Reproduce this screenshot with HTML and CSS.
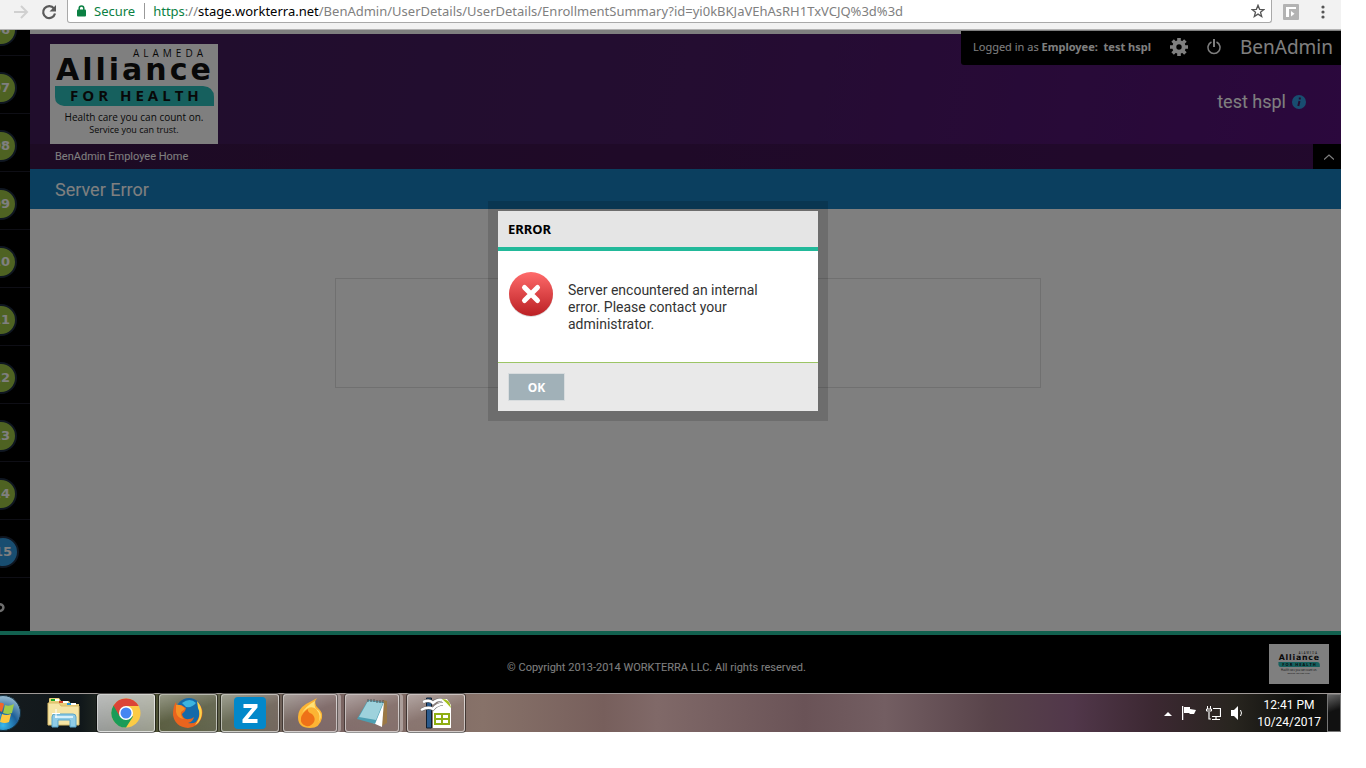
FILE: index.html
```
<!DOCTYPE html>
<html lang="en">

<head>
    <meta charset="UTF-8">
    <meta name="viewport" content="width=device-width, initial-scale=1.0">
    <title>Server Error - BenAdmin</title>
    <link rel="stylesheet" href="styles.css">
</head>

<body>
    <div class="screen">
        <!-- Browser toolbar -->
        <div class="toolbar">
            <button class="tool-button" aria-label="Forward">
                <svg width="16" height="16" viewBox="0 0 16 16" fill="none" stroke="#d0d0d0" stroke-width="2"><path d="M1 8h12M8 2l6 6-6 6"/></svg>
            </button>
            <button class="tool-button" aria-label="Reload">
                <svg width="16" height="16" viewBox="0 0 16 16"><path d="M13 4.5A6 6 0 1 0 14 9.5" fill="none" stroke="#5a5a5a" stroke-width="2.2"/><path d="M15 1v6.500H8.500z" fill="#5a5a5a"/></svg>
            </button>
            <div class="address-bar">
                <svg width="9" height="12" viewBox="0 0 9 12"><path d="M2.200 5V3.300a2.300 2.300 0 0 1 4.600 0V5" fill="none" stroke="#0b8043" stroke-width="1.500"/><rect y="4.500" width="9" height="7" rx="1" fill="#0b8043"/></svg>
                <span class="secure">Secure</span>
                <span class="url"><span class="scheme">https</span>://<b>stage.workterra.net</b>/BenAdmin/UserDetails/UserDetails/EnrollmentSummary?id=yi0kBKJaVEhAsRH1TxVCJQ%3d%3d</span>
                <button class="tool-button star" aria-label="Bookmark this page">
                    <svg width="14" height="14" viewBox="0 0 14 14" fill="none" stroke="#555" stroke-width="1.300"><path d="M7 1.300l1.600 4 4.300.2-3.400 2.700 1.200 4.300L7 10.100l-3.700 2.400 1.200-4.300L1.100 5.500l4.300-.2z"/></svg>
                </button>
            </div>
            <button class="tool-button" aria-label="Extension">
                <svg width="16" height="16" viewBox="0 0 16 16"><rect width="16" height="16" rx="1" fill="#b3b3b3"/><path d="M3 13V3h10v2H6v8z" fill="#fff"/><path d="M8 7l3.500 2.700L8 12.500z" fill="#fff"/></svg>
            </button>
            <button class="tool-button menu" aria-label="Menu">
                <svg width="4" height="14" viewBox="0 0 4 14" fill="#555"><circle cx="2" cy="2" r="1.600"/><circle cx="2" cy="7" r="1.600"/><circle cx="2" cy="12" r="1.600"/></svg>
            </button>
        </div>

        <div class="page">
            <div class="page-body">
                <nav class="steps">
                    <ol>
                        <li><a href="#">06</a></li>
                        <li><a href="#">07</a></li>
                        <li><a href="#">08</a></li>
                        <li><a href="#">09</a></li>
                        <li><a href="#">10</a></li>
                        <li><a href="#">11</a></li>
                        <li><a href="#">12</a></li>
                        <li><a href="#">13</a></li>
                        <li><a href="#">14</a></li>
                        <li><a href="#" class="current">15</a></li>
                    </ol>
                    <svg class="steps-more" width="5" height="12" viewBox="0 0 5 12"><path d="M-2 2.500C5 1 5 9 -1 9" fill="none" stroke="#ddd" stroke-width="2.500"/></svg>
                </nav>

                <main>
                    <header class="banner">
                        <svg class="logo" width="168" height="100" viewBox="0 0 168 100">
                            <rect width="168" height="100" fill="#fff"/>
                            <g id="alliance">
                                <text x="83" y="13" font-size="10" letter-spacing="4">ALAMEDA</text>
                                <text class="wordmark" x="6" y="36" font-size="30" letter-spacing="3">Alliance</text>
                                <path d="M5 42h148q11 1 11 11v9H14q-9-1-9-9z" fill="#2cc0bc"/>
                                <text x="20" y="57" font-size="15" font-weight="700" letter-spacing="4">FOR HEALTH</text>
                                <text x="84" y="77" font-size="10" text-anchor="middle">Health care you can count on.</text>
                                <text x="84" y="89" font-size="9" text-anchor="middle">Service you can trust.</text>
                            </g>
                        </svg>
                        <div class="account">
                            <div class="login-bar">
                                <span>Logged in as <b>Employee:&nbsp; test hspl</b></span>
                                <a href="#" aria-label="Settings">
                                    <svg width="18" height="18" viewBox="0 0 18 18"><circle cx="9" cy="9" r="4.700" fill="none" stroke="#fff" stroke-width="4"/><path d="M9 0v4M9 14v4M0 9h4M14 9h4M2.600 2.600l3 3M12.400 12.400l3 3M2.600 15.400l3-3M12.400 5.600l3-3" stroke="#fff" stroke-width="3.600"/></svg>
                                </a>
                                <a href="#" aria-label="Log out">
                                    <svg width="14" height="16" viewBox="0 0 14 16" fill="none" stroke="#fff" stroke-width="1.500"><path d="M4.500 3a6 6 0 1 0 5 0"/><path d="M7 0v8" stroke-width="2"/></svg>
                                </a>
                                <span class="brand">BenAdmin</span>
                            </div>
                            <div class="user">
                                <span>test hspl</span>
                                <svg width="14" height="14" viewBox="0 0 14 14"><circle cx="7" cy="7" r="7" fill="#309be0"/><path d="M7.800 2.500v2M7.500 6l-1.200 5" stroke="#481860" stroke-width="2"/></svg>
                            </div>
                        </div>
                    </header>
                    <nav class="main-nav">
                        <a href="#">BenAdmin Employee Home</a>
                        <button class="collapse" aria-label="Collapse header">
                            <svg width="10" height="6" viewBox="0 0 10 6" fill="none" stroke="#fff" stroke-width="1.300"><path d="M0 5.500l5-4.500 5 4.500"/></svg>
                        </button>
                    </nav>
                    <h1>Server Error</h1>
                    <div class="content">
                        <div class="panel"></div>
                    </div>
                </main>
            </div>

            <footer>
                <p>© Copyright 2013-2014 WORKTERRA LLC. All rights reserved.</p>
                <div class="footer-logo">
                    <svg width="44" height="26" viewBox="0 0 168 100"><use href="#alliance"/></svg>
                </div>
            </footer>

            <div class="overlay">
                <div class="dialog" role="alertdialog" aria-labelledby="dialog-title" aria-describedby="dialog-text">
                    <h2 id="dialog-title">ERROR</h2>
                    <div class="dialog-body">
                        <svg width="46" height="46" viewBox="0 0 46 46">
                            <defs>
                                <linearGradient id="red" x1="0" y1="0" x2="0" y2="1">
                                    <stop offset="0" stop-color="#ff6b6b"/>
                                    <stop offset="1" stop-color="#bb2024"/>
                                </linearGradient>
                            </defs>
                            <circle cx="23" cy="24" r="22" fill="#ddd"/>
                            <circle cx="23" cy="23" r="22" fill="url(#red)"/>
                            <path d="M16.500 16.500l13 13M29.500 16.500l-13 13" stroke="#fff" stroke-width="5" stroke-linecap="round"/>
                        </svg>
                        <p id="dialog-text">Server encountered an internal error. Please contact your administrator.</p>
                    </div>
                    <div class="dialog-footer">
                        <button class="ok-button">OK</button>
                    </div>
                </div>
            </div>
        </div>

        <!-- Windows taskbar -->
        <div class="taskbar">
            <button class="start" aria-label="Start">
                <svg width="21" height="38" viewBox="0 0 21 38">
                    <defs>
                        <radialGradient id="orb" cx="0.5" cy="0.85" r="0.8">
                            <stop offset="0" stop-color="#38b8ee"/>
                            <stop offset="0.5" stop-color="#1c5f98"/>
                            <stop offset="1" stop-color="#8fb4cc"/>
                        </radialGradient>
                    </defs>
                    <circle cx="3" cy="19" r="17.500" fill="url(#orb)" stroke="#14303f"/>
                    <path d="M-4 11q5-4 8-1l-2 8q-4-2-8 0z" fill="#f0662b"/>
                    <path d="M5 11q4 2 9-1l-2 9q-4 2-9 0z" fill="#9fcb4a"/>
                    <path d="M-6 20q4-2 7 0l-2 8q-3-2-7 0z" fill="#4da8e0"/>
                    <path d="M2 20q4 2 9 0l-2 8q-4 2-9 0z" fill="#fdc840"/>
                </svg>
            </button>
            <button class="explorer" aria-label="Windows Explorer">
                <svg width="34" height="32" viewBox="0 0 34 32">
                    <path d="M2 8V2q0-1 1-1h9l2 3h8l2 3h8v5H2z" fill="#e9cf79"/>
                    <path d="M4 2h4v2H4z" fill="#16a524"/><path d="M12 4h4v2h-4z" fill="#d4452b"/><path d="M20 6h4v2h-4z" fill="#2797d8"/>
                    <path d="M8 2h4v2H8zM16 4h5v2h-5zM24 6h5v2h-5z" fill="#fff"/>
                    <path d="M1 6h11l2 3h18v19H1z" fill="#f6e5a6" stroke="#d9bd6b"/>
                    <path d="M5 30V20q0-3 3-3h18q3 0 3 3v10h-6v-7H11v7z" fill="#8fcbe6" stroke="#5aa6cb"/>
                    <path d="M8 20h18" stroke="#d8f0fa" stroke-width="2"/>
                    <path d="M9 12v9M5 16.500h8" stroke="#fff"/>
                </svg>
            </button>
            <button class="task active" aria-label="Google Chrome">
                <svg width="30" height="30" viewBox="0 0 30 30">
                    <circle cx="15" cy="15" r="14.500" fill="#fccb45"/>
                    <path d="M15 15L2.500 7.500A14.500 14.500 0 0 0 15 29.500l7-11z" fill="#1a9c58"/>
                    <path d="M15 8h12.700A14.500 14.500 0 0 0 2.500 7.500L8.500 18 15 15z" fill="#db4437"/>
                    <circle cx="15" cy="15" r="7" fill="#fff"/><circle cx="15" cy="15" r="5.500" fill="#4586f2"/>
                </svg>
            </button>
            <button class="task" aria-label="Firefox">
                <svg width="30" height="30" viewBox="0 0 30 30">
                    <circle cx="16" cy="13" r="13" fill="#166aa9"/>
                    <path d="M9 5q8-6 14 0-4 5-10 4z" fill="#3cb4df"/>
                    <path d="M25 4q7 8 3 17-3 8-13 9Q2 29 0 17 0 8 3 4l1 4 4-1q2 1 5 3l-1 3-3 3q1 6 7 5 3 0 5-2-1 5-6 6 9 2 11-7 1-6-1-14z" fill="#e9641e"/>
                    <path d="M24 3q7 8 4 17-2 5-6 7 7-9 3-17z" fill="#fcd34a"/>
                    <path d="M3 7q5-1 9 4l-4 3q-1 4 3 7-7-1-8-7z" fill="#f59025"/>
                </svg>
            </button>
            <button class="task" aria-label="Zoho">
                <svg width="32" height="32" viewBox="0 0 32 32"><rect width="32" height="32" rx="4" fill="#0288ca"/><path d="M9.500 7h14v3.500l-9.500 11.500h9.500v4H8.500V22.500L18 11H9.500z" fill="#fff"/></svg>
            </button>
            <button class="task stacked" aria-label="Spark">
                <svg width="26" height="32" viewBox="0 0 26 32">
                    <path d="M20 1q-4 5 1 10 5 4 4 10-2 10-12 10Q1 31 1 20q0-8 8-13Q15 4 20 1z" fill="#fcb434"/>
                    <path d="M18 4q-9 5-13 12 8-9 14-4 6 7 2 14 5-7 1-12-6-3-4-10z" fill="#ffe278"/>
                    <path d="M11 12q-1 3 4 5 4 4 2 8-3 5-8 4-6-2-5-8 1-5 7-9z" fill="#ee7118"/>
                </svg>
            </button>
            <button class="task stacked" aria-label="Notepad">
                <svg width="32" height="30" viewBox="0 0 32 30">
                    <path d="M27 2l4 1v22l-5 3z" fill="#9b7845"/><path d="M28 3l-2 26-9-4z" fill="#fff"/>
                    <path d="M12 2l16 2-9 22L1 21z" fill="#4d9fb2"/><path d="M12 3l15 2-7 17L3 19z" fill="#9ed2dc"/>
                    <path d="M12 1v3M15 1v3M18 1v3M21 2v3M24 2v3M27 2v3" stroke="#545454"/>
                </svg>
            </button>
            <button class="task" aria-label="OpenOffice Calc">
                <svg width="32" height="32" viewBox="0 0 32 32">
                    <path d="M6.500 1h5v30h-5z" fill="#2b5a8c" stroke="#101e2f"/>
                    <path d="M13 11l9-9h5l4 6v23H13z" fill="#fff"/><path d="M22 2q8 0 9 9-4-5-9-9z" fill="#a3bf1d"/>
                    <path d="M14 16h16v12H14z" fill="#8fae12"/><path d="M16 18h5v3h-5zM23 18h5v3h-5zM16 23h5v3h-5zM23 23h5v3h-5z" fill="#fff"/>
                    <path d="M3 5q7-3 10 1 4-4 9-3M1 13q7-4 12-1 4-5 10-5" fill="none" stroke="#666" stroke-width="3.500"/>
                    <path d="M3 5q7-3 10 1 4-4 9-3M1 13q7-4 12-1 4-5 10-5" fill="none" stroke="#fff" stroke-width="2.500"/>
                </svg>
            </button>

            <div class="tray">
                <svg width="8" height="5" viewBox="0 0 8 5"><path d="M0 5l4-4 4 4z" fill="#fff"/></svg>
                <svg width="14" height="14" viewBox="0 0 14 14"><path d="M.500 0v14" stroke="#fff" stroke-width="1.500"/><path d="M2 1h6v2l6 1-2 4H8L7 7H2z" fill="#fff"/></svg>
                <svg width="15" height="14" viewBox="0 0 15 14" fill="none" stroke="#fff"><path d="M7 2.500h7.500v8H6M10 11v2M6 13.500h8M3 6v7h2" stroke-width="1.200"/><path d="M1.500 0v3M4.500 0v3M.500 3h5v2h-5z"/></svg>
                <svg width="13" height="14" viewBox="0 0 13 14"><path d="M0 4h3l4-4v14l-4-4H0z" fill="#fff"/><path d="M9.500 4q2 3 0 6" fill="none" stroke="#fff"/></svg>
                <div class="clock">12:41 PM<br>10/24/2017</div>
            </div>
            <button class="show-desktop" aria-label="Show desktop"></button>
        </div>
    </div>
</body>

</html>
```
FILE: styles.css
```
* {
    box-sizing: border-box;
}

body {
    margin: 0;
    background: #fff;
    font-family: Roboto, Tahoma, sans-serif;
    font-size: 11px;
    color: #fff;
}

button {
    padding: 0;
    border: none;
    background: none;
    font-family: inherit;
    cursor: pointer;
}

svg {
    display: block;
    flex-shrink: 0;
}

a {
    color: inherit;
    text-decoration: none;
}

.screen {
    display: flex;
    flex-direction: column;
    min-height: calc(100vh - 36px);
    margin: 0 25px 36px 0;
}

/* Browser toolbar */

.toolbar {
    display: flex;
    align-items: center;
    height: 30px;
    padding: 0 6px 6px 13px;
    gap: 12px;
    background: #f2f2f2;
    border-bottom: 1px solid #b4b4b4;
}

.address-bar {
    display: flex;
    flex: 1;
    align-items: center;
    align-self: stretch;
    min-width: 0;
    margin: 0 -1px 0 -2px;
    padding: 0 6px 0 9px;
    gap: 8px;
    background: #fff;
    border: 1px solid #a9a9a9;
    border-top: none;
    border-radius: 0 0 3px 3px;
    font-family: 'Noto Sans', 'Segoe UI', sans-serif;
    font-size: 13px;
    line-height: 16px;
    color: #808080;
    white-space: nowrap;
}

.secure {
    padding-right: 9px;
    border-right: 1px solid #999;
    color: #0b8043;
}

.url {
    overflow: hidden;
    height: 20px;
    line-height: 20px;
}

.url b {
    font-weight: 400;
    color: #000;
}

.scheme {
    color: #0b8043;
}

.star {
    margin-left: auto;
}

.menu {
    width: 24px;
    padding-left: 10px;
}

/* Page */

.page {
    position: relative;
    display: flex;
    flex: 1;
    flex-direction: column;
}

.page-body {
    display: flex;
    flex: 1;
}

.steps {
    width: 30px;
    overflow: hidden;
    background: #000;
}

.steps ol {
    margin: -32px 0 0;
    padding: 0;
    list-style: none;
}

.steps li {
    display: flex;
    align-items: center;
    height: 58px;
    padding-top: 6px;
    border-bottom: 1px solid #1c1c2a;
}

.steps a {
    width: 32px;
    height: 32px;
    margin-left: -15px;
    border: 2px solid #1e2c42;
    border-radius: 50%;
    background: #9cc544;
    font-family: 'DejaVu Sans', Verdana, sans-serif;
    font-size: 13px;
    font-weight: 700;
    line-height: 28px;
    text-align: center;
}

.steps a.current {
    margin-left: -13px;
    background: #309be0;
}

.steps-more {
    margin-top: 24px;
}

main {
    display: flex;
    flex: 1;
    flex-direction: column;
    min-width: 0;
    padding-top: 4px;
    background: #fff;
}

.banner {
    display: flex;
    justify-content: space-between;
    height: 110px;
    padding-left: 20px;
    background: linear-gradient(100deg, #401a58, #481a62 50%, #56107a);
}

.logo {
    margin-top: 10px;
}

#alliance {
    font-family: 'Open Sans', sans-serif;
    fill: #111;
}

.wordmark {
    font-family: 'DejaVu Sans', Verdana, sans-serif;
    font-weight: 700;
}

.account {
    margin-top: -3px;
}

.login-bar {
    display: flex;
    align-items: center;
    height: 34px;
    padding: 0 8px 3px 12px;
    gap: 19px;
    background: #000;
    border-radius: 0 0 0 3px;
    font-family: 'Noto Sans', Tahoma, sans-serif;
}

.brand {
    font-size: 19px;
    line-height: 24px;
}

.user {
    display: flex;
    justify-content: flex-end;
    align-items: center;
    gap: 6px;
    margin-top: 25px;
    padding-right: 35px;
    font-size: 18px;
    line-height: 24px;
}

.main-nav {
    display: flex;
    justify-content: space-between;
    align-items: center;
    height: 25px;
    padding-left: 25px;
    background: linear-gradient(100deg, #3a1648, #44125a);
    line-height: 16px;
}

.collapse {
    display: flex;
    justify-content: center;
    align-items: center;
    width: 28px;
    height: 25px;
    padding-left: 4px;
    background: #000;
}

h1 {
    margin: 0;
    padding: 2px 25px 0;
    background: #167ebe;
    font-size: 18px;
    font-weight: 400;
    line-height: 38px;
}

.content {
    flex: 1;
    padding: 69px 0 69px 5px;
}

.panel {
    width: 54%;
    height: 110px;
    margin: 0 auto;
    border: 1px solid #e0e0e0;
}

footer {
    display: grid;
    grid-template-columns: 1fr auto 1fr;
    align-items: center;
    height: 62px;
    padding-right: 28px;
    background: #000;
    border-top: 4px solid #24c29e;
}

footer p {
    grid-column: 2;
    margin: 0;
    padding-top: 8px;
    line-height: 16px;
}

.footer-logo {
    display: flex;
    justify-content: center;
    align-items: center;
    justify-self: end;
    width: 60px;
    height: 40px;
    margin-right: -16px;
    background: #fff;
}

/* Error dialog */

.overlay {
    position: absolute;
    inset: 0;
    display: flex;
    justify-content: center;
    align-items: flex-start;
    padding: 171px 25px 0 0;
    background: rgba(0, 0, 0, 0.5);
}

.dialog {
    width: 340px;
    border: 10px solid rgba(0, 0, 0, 0.14);
    background: #fff;
    background-clip: padding-box;
    color: #333;
}

.dialog h2 {
    margin: 0;
    padding: 0 10px;
    background: #e5e5e5;
    border-bottom: 4px solid #22b99a;
    color: #000;
    font-family: 'Noto Sans', Tahoma, sans-serif;
    font-size: 13px;
    line-height: 36px;
}

.dialog-body {
    display: flex;
    gap: 14px;
    padding: 20px 50px 29px 10px;
}

.dialog-body p {
    margin: 11px 0 0;
    font-size: 14px;
    line-height: 17px;
}

.dialog-footer {
    padding: 10px;
    background: #e9e9e9;
    border-top: 1px solid #9cc565;
}

.ok-button {
    display: block;
    width: 57px;
    height: 28px;
    background: #a1b1b8;
    border: 1px solid #d8dcde;
    color: #fff;
    font-family: 'Noto Sans', Tahoma, sans-serif;
    font-size: 12px;
    font-weight: 700;
}

/* Taskbar */

.taskbar {
    display: flex;
    align-items: center;
    height: 39px;
    border-top: 1px solid #a09a98;
    background: linear-gradient(90deg, #151b1e 0, #10171a 6%, #4f5334 12%, #5f614a 17%, #76605f 23%, #877269 36%, #775f5c 45%, #806968 49%, #6a5357 60%, #735e62 66%, #58434a 74%, #51374a 80%, #3c2832 86%, #28251f 92%, #0d0e0c 97%, #111 100%);
}

.start {
    width: 20px;
}

.explorer {
    margin: 0 16px 0 27px;
}

.task {
    display: flex;
    justify-content: center;
    align-items: center;
    width: 58px;
    height: 38px;
    margin-right: 4px;
    border: 1px solid rgba(255, 255, 255, 0.55);
    border-radius: 3px;
    background: linear-gradient(160deg, rgba(255, 255, 255, 0.4), rgba(255, 255, 255, 0.08) 50%, rgba(255, 255, 255, 0.05));
    box-shadow: 0 0 0 1px rgba(0, 0, 0, 0.5);
}

.task.active {
    background: linear-gradient(160deg, rgba(255, 255, 255, 0.7), rgba(255, 255, 255, 0.45));
}

.task.stacked {
    width: 54px;
    margin-right: 8px;
    box-shadow: 0 0 0 1px rgba(0, 0, 0, 0.4), 4px 0 0 0 rgba(255, 255, 255, 0.35);
}

.tray {
    display: flex;
    align-items: center;
    gap: 10px;
    margin-left: auto;
}

.clock {
    margin: 0 6px 0 3px;
    padding-top: 2px;
    font-size: 12px;
    line-height: 17px;
    text-align: center;
}

.show-desktop {
    width: 14px;
    height: 38px;
    border: 1px solid #777;
    background: linear-gradient(160deg, #666, #111 45%);
}
```
